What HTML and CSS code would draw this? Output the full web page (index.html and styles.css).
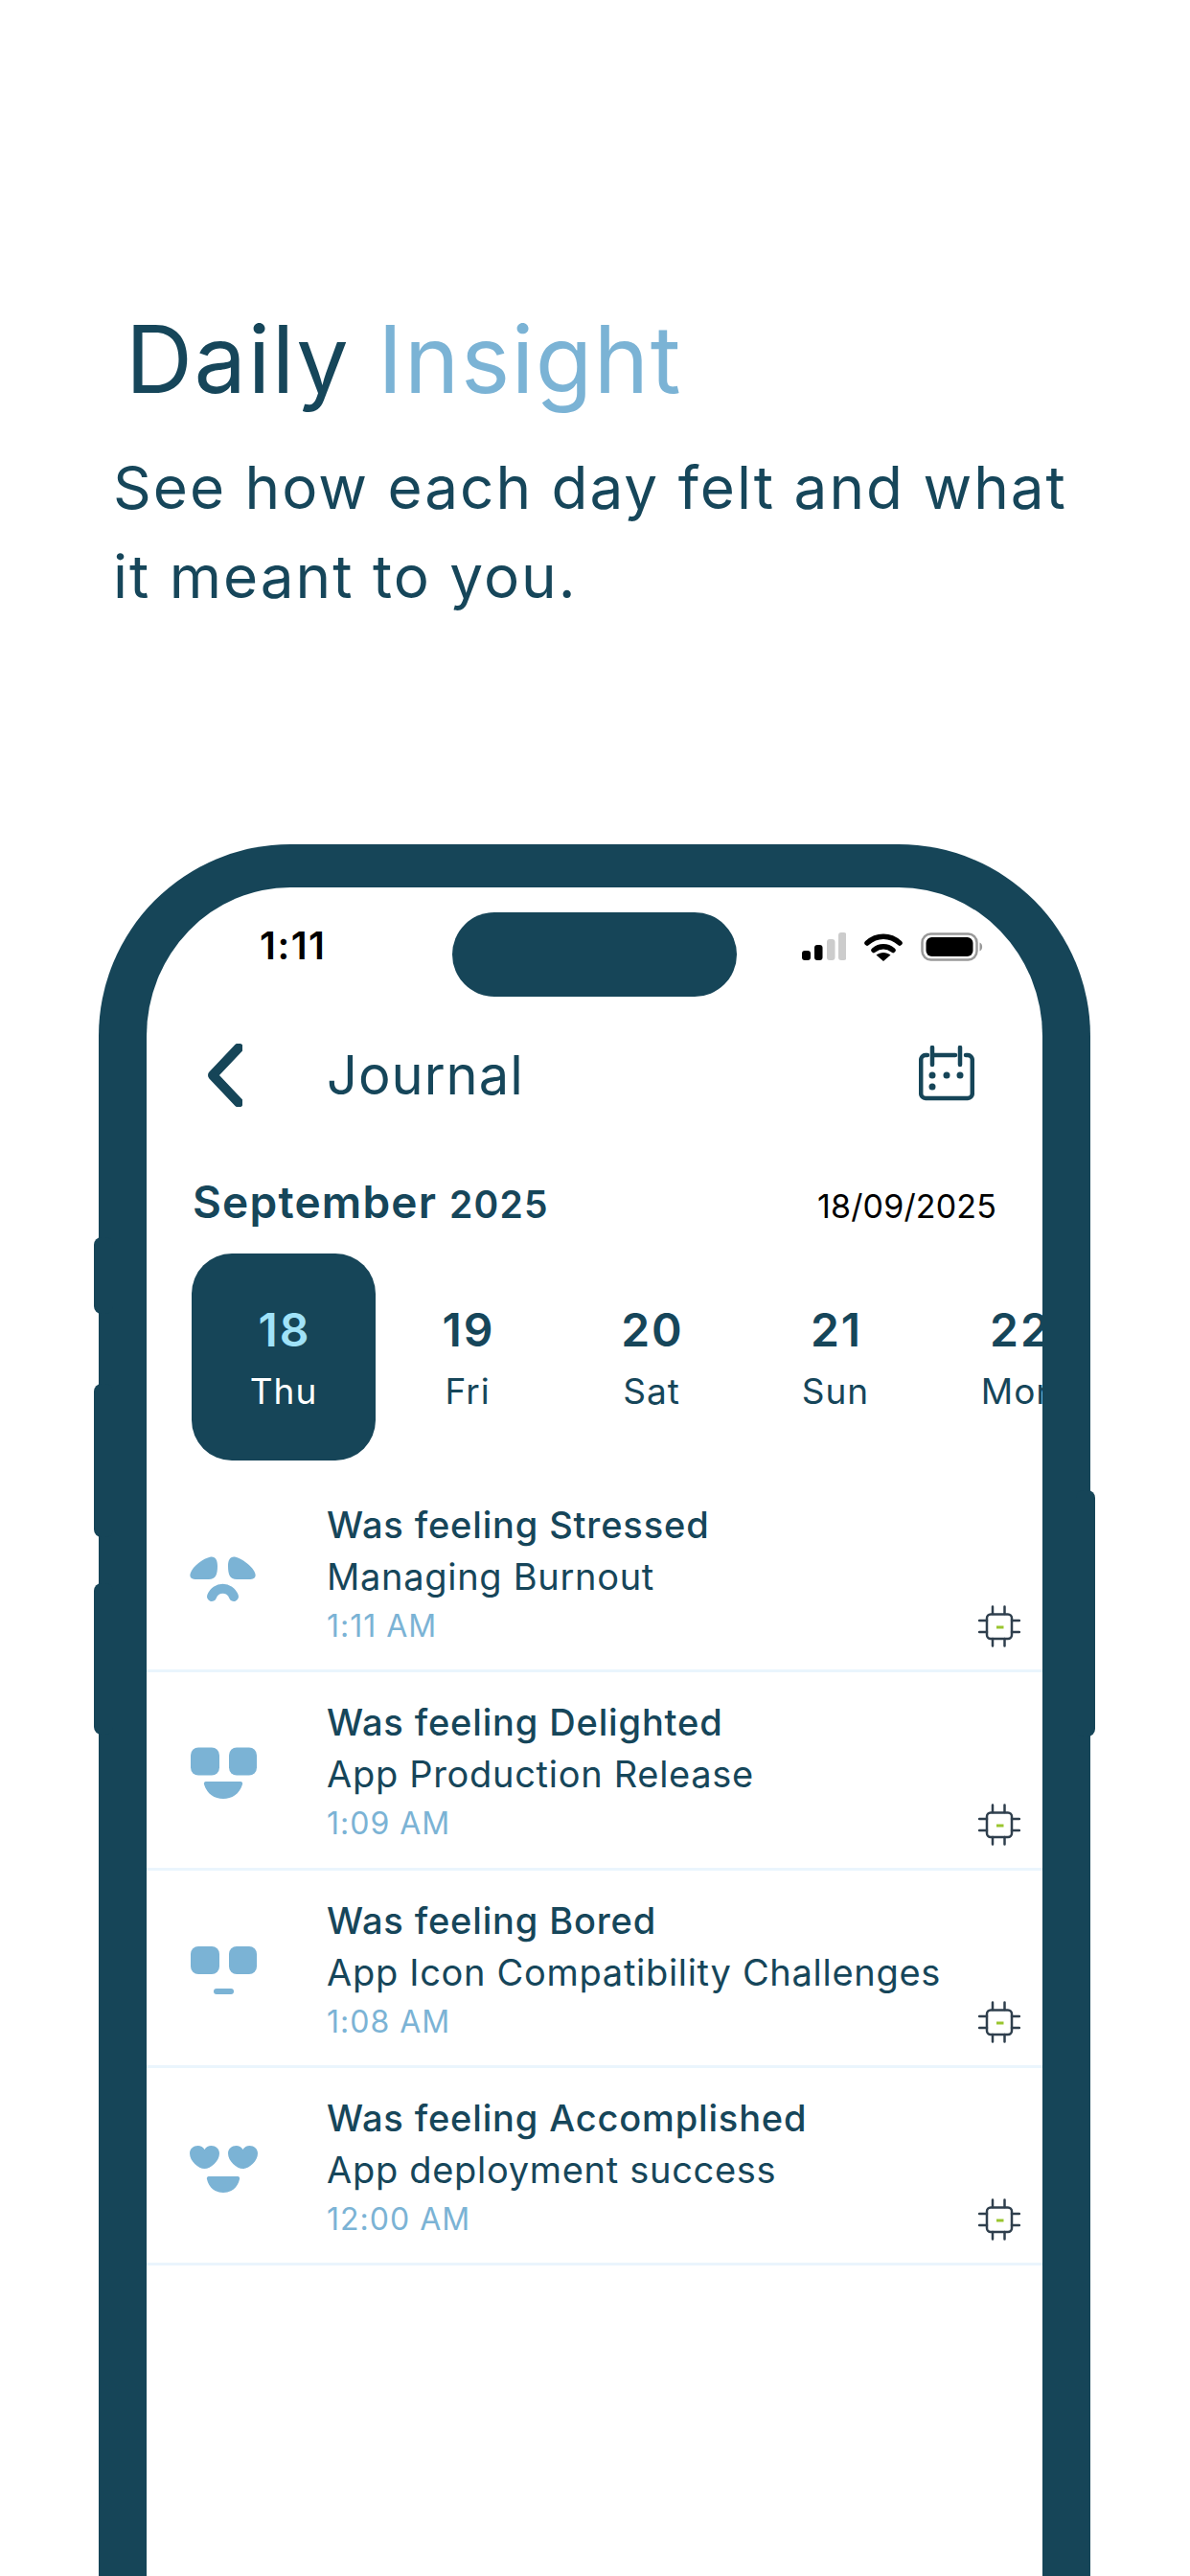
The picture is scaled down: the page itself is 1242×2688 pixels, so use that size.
FILE: index.html

```html
<!DOCTYPE html>
<html lang="en">
<head>
  <meta charset="UTF-8" />
  <title>Daily Insight</title>
  <link rel="stylesheet" href="styles.css">
</head>
<body>
  <svg class="defs" width="0" height="0">
    <symbol id="chip" viewBox="0 0 44 44">
      <rect class="chip-line" x="9" y="9.500" width="26" height="25.500" rx="4" />
      <path class="chip-line" d="M15 1.500V9M27.500 1.500V9M15 35V42.500M27.500 35V42.500M1 16H9M1 28H9M35 16H43M35 28H43" />
      <path class="chip-dash" d="M19 23H26.500" />
    </symbol>
  </svg>

  <header class="hero">
    <h1>Daily <span class="accent">Insight</span></h1>
    <p>See how each day felt and what<br>it meant to you.</p>
  </header>

  <div class="phone">
    <span class="side-btn left btn-a"></span>
    <span class="side-btn left btn-b"></span>
    <span class="side-btn left btn-c"></span>
    <span class="side-btn right btn-d"></span>

    <div class="status">
      <div class="status-time">1:11</div>
      <div class="island"></div>
      <div class="status-icons">
        <svg width="46" height="30" viewBox="0 0 46 30">
          <rect x="0" y="19" width="9" height="10" rx="3" fill="#000" />
          <rect x="13" y="13" width="8.500" height="16" rx="3" fill="#000" />
          <rect x="26" y="7" width="8.500" height="22" rx="3" fill="#ccc" />
          <rect x="38" y="0" width="8.500" height="29" rx="3" fill="#ccc" />
        </svg>
        <svg width="40" height="30" viewBox="0 0 40 30">
          <path d="M3 11C13 2 27 2 37 11" fill="none" stroke="#000" stroke-width="5.500" stroke-linecap="round" />
          <path d="M10 18.500C16 13.500 24 13.500 30 18.500" fill="none" stroke="#000" stroke-width="5.500" stroke-linecap="round" />
          <path d="M20 30L12.500 23.500C17 20 23 20 27.500 23.500Z" fill="#000" />
        </svg>
        <svg width="66" height="30" viewBox="0 0 66 30">
          <rect x="1.500" y="1.500" width="57" height="27" rx="9" fill="none" stroke="#999" stroke-width="2.500" />
          <rect x="5.500" y="5" width="49" height="20" rx="6" fill="#000" />
          <path d="M61.500 10.500C65 11.500 65 18.500 61.500 19.500Z" fill="#999" />
        </svg>
      </div>
    </div>

    <nav class="nav">
      <svg class="back" width="36" height="66" viewBox="0 0 36 66">
        <path d="M32 4.500L5 33L32 61.500" />
      </svg>
      <span class="nav-title">Journal</span>
      <svg class="cal" width="58" height="58" viewBox="0 0 58 58">
        <path d="M9 10H7A5 5 0 0 0 2.200 15V50A5 5 0 0 0 7 55H51A5 5 0 0 0 55.800 50V15A5 5 0 0 0 51 10H49" />
        <path d="M14 2V20M43 2V20M16 10H38" />
        <circle cx="14" cy="31" r="3.500" />
        <circle cx="29" cy="31" r="3.500" />
        <circle cx="43" cy="31" r="3.500" />
        <circle cx="14" cy="43" r="3.500" />
      </svg>
    </nav>

    <div class="month">
      <div class="month-name">September <span class="month-year">2025</span></div>
      <div class="month-date">18/09/2025</div>
    </div>

    <div class="days">
      <div class="day active"><b>18</b><span>Thu</span></div>
      <div class="day"><b>19</b><span>Fri</span></div>
      <div class="day"><b>20</b><span>Sat</span></div>
      <div class="day"><b>21</b><span>Sun</span></div>
      <div class="day"><b>22</b><span>Mon</span></div>
    </div>

    <div class="entries">
      <div class="entry">
        <svg class="face" width="72" height="70" viewBox="0 0 72 70">
          <path d="M1 32C3 26 14 17 22 15.500C27 15 29 19 29 25C29 34 27 39 20 39H7C2 39 -1 37 1 32Z" />
          <path d="M68 32C66 26 55 17 47 15.500C42 15 40 19 40 25C40 34 42 39 49 39H62C67 39 70 37 68 32Z" />
          <path class="mouth-line" d="M23 57C27 46 42 46 46 57" />
        </svg>
        <div class="entry-text">
          <div class="entry-title">Was feeling Stressed</div>
          <div class="entry-sub">Managing Burnout</div>
          <div class="entry-time">1:11 AM</div>
        </div>
        <svg class="chip-icon" width="44" height="44"><use href="#chip" /></svg>
      </div>

      <div class="entry">
        <svg class="face" width="72" height="70" viewBox="0 0 72 70">
          <rect x="1" y="8.500" width="30" height="29" rx="8" />
          <rect x="41" y="8.500" width="29" height="29" rx="8" />
          <path d="M17 44H53C55 44 55.500 46 55 47C52 57 44 62 35 62C26 62 18 57 15 47C14.500 46 15 44 17 44Z" />
        </svg>
        <div class="entry-text">
          <div class="entry-title">Was feeling Delighted</div>
          <div class="entry-sub">App Production Release</div>
          <div class="entry-time">1:09 AM</div>
        </div>
        <svg class="chip-icon" width="44" height="44"><use href="#chip" /></svg>
      </div>

      <div class="entry">
        <svg class="face" width="72" height="70" viewBox="0 0 72 70">
          <rect x="1" y="9" width="30" height="29" rx="8" />
          <rect x="41" y="9" width="29" height="29" rx="8" />
          <rect x="25" y="53" width="21" height="6" rx="3" />
        </svg>
        <div class="entry-text">
          <div class="entry-title">Was feeling Bored</div>
          <div class="entry-sub">App Icon Compatibility Challenges</div>
          <div class="entry-time">1:08 AM</div>
        </div>
        <svg class="chip-icon" width="44" height="44"><use href="#chip" /></svg>
      </div>

      <div class="entry">
        <svg class="face" width="72" height="70" viewBox="0 0 72 70">
          <path d="M15.500 35C9 35 0 27 0 19C0 14 4 11 8.500 11C11.500 11 14 12.500 15.500 15C17 12.500 19.500 11 22.500 11C27 11 31 14 31 19C31 27 22 35 15.500 35Z" />
          <path d="M55.500 35C49 35 40 27 40 19C40 14 44 11 48.500 11C51.500 11 54 12.500 55.500 15C57 12.500 59.500 11 62.500 11C67 11 71 14 71 19C71 27 62 35 55.500 35Z" />
          <path d="M20 43H50C52 43 52.500 45 52 46C50 55 43 60 35 60C27 60 20 55 18 46C17.500 45 18 43 20 43Z" />
        </svg>
        <div class="entry-text">
          <div class="entry-title">Was feeling Accomplished</div>
          <div class="entry-sub">App deployment success</div>
          <div class="entry-time">12:00 AM</div>
        </div>
        <svg class="chip-icon" width="44" height="44"><use href="#chip" /></svg>
      </div>
    </div>
  </div>
</body>
</html>
```

FILE: styles.css

```css
* {
  box-sizing: border-box;
}
body {
  margin: 0;
  height: 2688px;
  overflow: hidden;
  background: #fff;
  font-family: Inter, "Liberation Sans", sans-serif;
  color: #16465a;
}
.defs {
  position: absolute;
}

/* top text */
.hero {
  height: 881px;
  padding-top: 315px;
}
.hero h1 {
  margin: 0 0 0 131px;
  font-size: 97px;
  line-height: 120px;
  font-weight: 400;
  letter-spacing: 1.6px;
}
.accent {
  color: #7bb3d5;
}
.hero p {
  margin: 27px 0 0 118px;
  font-size: 62px;
  line-height: 93px;
  letter-spacing: 2px;
}

/* phone frame, runs off the bottom of the page */
.phone {
  position: relative;
  width: 1035px;
  height: 1807px;
  margin-left: 103px;
  background: #fff;
  border: solid #164558;
  border-width: 45px 50px 0;
  border-radius: 200px 200px 0 0;
}
.side-btn {
  position: absolute;
  width: 20px;
  background: #164558;
  border-radius: 8px;
}
.side-btn.left {
  left: -55px;
}
.side-btn.right {
  right: -55px;
}
.btn-a { top: 365px; height: 80px; }
.btn-b { top: 518px; height: 160px; }
.btn-c { top: 726px; height: 158px; }
.btn-d { top: 629px; height: 257px; }

.status {
  display: flex;
  align-items: flex-start;
  padding-top: 26px;
  height: 114px;
}
.status-time {
  width: 319px;
  padding: 10px 0 0 118px;
  font-size: 40px;
  line-height: 50px;
  font-weight: 600;
  letter-spacing: 1.5px;
  color: #000;
}
.island {
  width: 297px;
  height: 88px;
  border-radius: 44px;
  background: #164558;
}
.status-icons {
  display: flex;
  gap: 19px;
  margin: 21px 0 0 68px;
}

.nav {
  display: flex;
  align-items: center;
  height: 84px;
  margin-top: 40px;
  padding: 0 71px 0 64px;
}
.back path {
  fill: none;
  stroke: #164558;
  stroke-width: 10;
  stroke-linecap: round;
  stroke-linejoin: round;
}
.nav-title {
  margin-left: 88px;
  font-size: 56px;
  letter-spacing: 1px;
  font-weight: 400;
}
.cal {
  margin-left: auto;
  margin-top: -4px;
}
.cal path {
  fill: none;
  stroke: #164558;
  stroke-width: 4.500;
  stroke-linecap: round;
}
.cal circle {
  fill: #164558;
}

.month {
  display: flex;
  justify-content: space-between;
  align-items: baseline;
  height: 82px;
  margin-top: 62px;
  padding: 0 48px 0 48px;
}
.month-name {
  font-size: 46px;
  font-weight: 600;
  letter-spacing: 1.2px;
}
.month-year {
  font-size: 39px;
}
.month-date {
  font-size: 34px;
  color: #000;
  letter-spacing: 0.15px;
}

.days {
  display: flex;
  height: 216px;
  padding-left: 47px;
  overflow: hidden;
}
.day {
  flex: 0 0 192px;
  display: flex;
  flex-direction: column;
  align-items: center;
  padding-top: 50px;
  border-radius: 42px;
}
.day b {
  padding-left: 2px;
  font-size: 48px;
  line-height: 60px;
  font-weight: 600;
  letter-spacing: 2px;
}
.day span {
  margin-top: 10px;
  font-size: 37px;
  line-height: 48px;
  letter-spacing: 1px;
}
.day.active {
  background: #164558;
  color: #fff;
}
.day.active b {
  color: #a0e2f8;
}

.entries {
  margin-top: 15px;
}
.entry {
  display: flex;
  height: 206.33px;
  padding-left: 45px;
  border-bottom: 3px solid #eaf5fd;
}
.face {
  flex: none;
  margin-top: 70px;
  fill: #7bb3d5;
}
.mouth-line {
  fill: none;
  stroke: #7bb3d5;
  stroke-width: 10;
  stroke-linecap: round;
}
.entry-text {
  margin-left: 71px;
  padding-top: 30px;
  white-space: nowrap;
}
.entry-title {
  font-size: 38px;
  line-height: 44px;
  font-weight: 500;
  letter-spacing: 0.85px;
}
.entry-sub {
  margin-top: 9px;
  font-size: 38px;
  line-height: 46px;
  letter-spacing: 0.7px;
}
.entry-time {
  margin-top: 9px;
  font-size: 32px;
  line-height: 40px;
  color: #7bb3d5;
  letter-spacing: 1px;
}
.chip-icon {
  flex: none;
  align-self: flex-end;
  margin: 0 23px 23px auto;
}
.chip-line {
  fill: none;
  stroke: #2f3f4d;
  stroke-width: 2.500;
  stroke-linecap: round;
}
.chip-dash {
  fill: none;
  stroke: #9ac52f;
  stroke-width: 3;
}
```
